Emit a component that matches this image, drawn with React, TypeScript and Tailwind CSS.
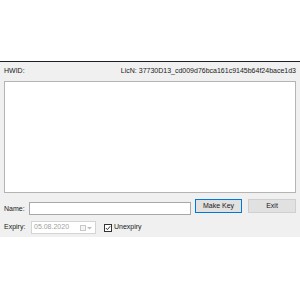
export default function App() {
  return (
    <main className="w-[300px] h-[300px] bg-white flex flex-col text-[7px] text-[#1a1a1a] [font-family:'Liberation_Sans',Arial,sans-serif]">
      <div className="h-[61px] bg-white" />
      <div className="h-px bg-[#221a2c]" />

      <div className="h-[175px] bg-[#f0f0f0] px-[4px] flex flex-col">
        <div className="h-[19px] flex items-center justify-between">
          <span>HWID:</span>
          <span>LicN: 37730D13_cd009d76bca161c9145b64f24bace1d3</span>
        </div>

        <div className="h-[112px] bg-white border border-[#b4b4b4]" />

        <div className="flex items-start mt-[6px]">
          <span className="w-[25px] mt-[5px]">Name:</span>
          <div className="w-[162px] h-[13px] mt-[3px] bg-white border border-[#a8a8a8]" />
          <button className="ml-[4px] w-[47px] h-[14px] bg-[#e1e1e1] border border-[#0078d7] flex items-center justify-center text-[7px]">
            Make Key
          </button>
          <button className="ml-[6px] w-[48px] h-[14px] bg-[#e1e1e1] border border-[#cfcfcf] flex items-center justify-center text-[7px]">
            Exit
          </button>
        </div>

        <div className="flex items-center mt-[6px]">
          <span className="w-[27px]">Expiry:</span>
          <div className="w-[65px] h-[13px] bg-white border border-[#d4d4d4] flex items-center pl-[2px] pr-[3px]">
            <span className="text-[#a0a0a0]">05.08.2020</span>
            <div className="ml-auto flex items-center gap-[1px]">
              <div className="w-[6px] h-[6px] border border-[#c8c8c8] bg-[#f4f4f4]" />
              <svg width="5" height="4" viewBox="0 0 5 4">
                <path d="M0 1 L5 1 L2.5 3.5 Z" fill="#bdbdbd" />
              </svg>
            </div>
          </div>
          <div className="ml-[8px] w-[8px] h-[8px] bg-white border border-[#333] flex items-center justify-center">
            <svg width="6" height="6" viewBox="0 0 6 6">
              <path d="M0.8 3 L2.4 4.6 L5.3 1.2" fill="none" stroke="#222" strokeWidth="0.9" />
            </svg>
          </div>
          <span className="ml-[2px]">Unexpiry</span>
        </div>
      </div>

      <div className="flex-1 bg-white" />
    </main>
  );
}
